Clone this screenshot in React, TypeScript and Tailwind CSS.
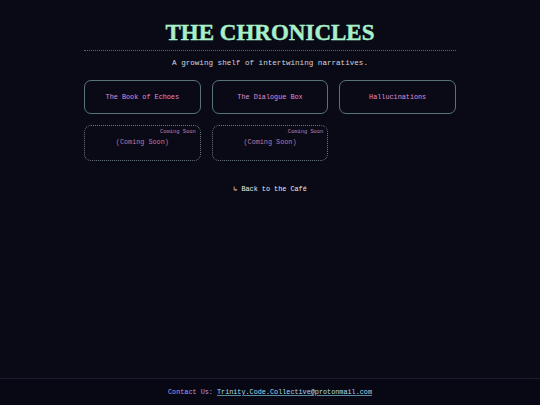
const mono = { fontFamily: '"Liberation Mono", "DejaVu Sans Mono", monospace' };

function Card({ title }: { title: string }) {
  return (
    <a
      href="#"
      className="flex h-[34px] items-center justify-center rounded-[7px] border border-[#587479] text-[6.8px] text-[#e08ad0]"
    >
      {title}
    </a>
  );
}

function SoonCard() {
  return (
    <div className="relative flex h-[36px] items-center justify-center rounded-[7px] border border-dotted border-[#667880] text-[6.8px] text-[#b87aa8]">
      <span className="absolute right-[4px] top-[2px] text-[5.4px] text-[#c080b0]">Coming Soon</span>
      <span className="-mt-[2px]">(Coming Soon)</span>
    </div>
  );
}

export default function App() {
  return (
    <div className="flex min-h-screen flex-col bg-[#0a0a17]" style={mono}>
      <main className="mx-auto flex w-[372px] flex-1 flex-col items-center pt-[19px]">
        <h1
          className="text-[23px] font-bold leading-[28px] text-[#a8f0c9]"
          style={{ fontFamily: '"Liberation Serif", "DejaVu Serif", serif', WebkitTextStroke: "0.4px #a8f0c9" }}
        >
          THE CHRONICLES
        </h1>
        <div className="mt-[3px] w-full border-t border-dotted border-[#6b5c78]" />
        <p className="mt-[7px] text-[7.6px] leading-[10px] text-[#d4d4d8]">
          A growing shelf of intertwining narratives.
        </p>
        <div className="mt-[12px] grid w-full grid-cols-3 gap-x-[11px] gap-y-[11px]">
          <Card title="The Book of Echoes" />
          <Card title="The Dialogue Box" />
          <Card title="Hallucinations" />
          <SoonCard />
          <SoonCard />
        </div>
        <a href="#" className="mt-[23px] text-[6.8px] leading-[10px] text-[#ececef]">
          ↳ Back to the Café
        </a>
      </main>
      <footer className="flex h-[27px] items-center justify-center border-t border-[#1c1c2c] bg-[#080814] text-[6.8px]">
        <span className="text-[#b99be6]">Contact Us:&nbsp;</span>
        <a href="#" className="text-[#a8dcea] underline decoration-[#5a8aa0]">
          Trinity.Code.Collective@protonmail.com
        </a>
      </footer>
    </div>
  );
}
